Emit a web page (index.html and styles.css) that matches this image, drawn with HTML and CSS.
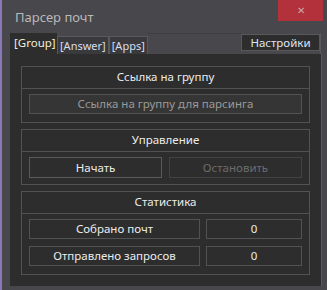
FILE: index.html
```html
<!DOCTYPE html>
<html lang="ru">
<head>
    <meta charset="UTF-8">
    <meta name="viewport" content="width=device-width, initial-scale=1.0">
    <title>Парсер почт</title>
    <link rel="stylesheet" href="styles.css">
</head>
<body>
    <div class="window">
        <div class="titlebar">
            <span class="title">Парсер почт</span>
            <span class="close">&#x2715;</span>
        </div>

        <div class="tabs">
            <div class="tab active">[Group]</div>
            <div class="tab">[Answer]</div>
            <div class="tab">[Apps]</div>
            <div class="spacer"></div>
            <button class="settings">Настройки</button>
        </div>

        <div class="content">
            <div class="group">
                <div class="group-title">Ссылка на группу</div>
                <div class="group-body">
                    <div class="field">Ссылка на группу для парсинга</div>
                </div>
            </div>

            <div class="group">
                <div class="group-title">Управление</div>
                <div class="group-body row">
                    <button class="btn">Начать</button>
                    <button class="btn" disabled>Остановить</button>
                </div>
            </div>

            <div class="group">
                <div class="group-title">Статистика</div>
                <div class="group-body stats">
                    <div class="cell label">Собрано почт</div>
                    <div class="cell value">0</div>
                    <div class="cell label">Отправлено запросов</div>
                    <div class="cell value">0</div>
                </div>
            </div>
        </div>
    </div>
</body>
</html>
```

FILE: styles.css
```css
body {
    margin: 0;
    background-color: #8a79b6;
    font-family: "Noto Sans", Arial, sans-serif;
    font-size: 11.5px;
    color: #ececec;
}
.window {
    margin-left: 2px;
    width: 325px;
    height: 290px;
    background-color: #48474c;
    display: flex;
    flex-direction: column;
}
.titlebar {
    height: 33px;
    display: flex;
    align-items: flex-start;
    justify-content: space-between;
}
.title {
    margin: 8px 0 0 13px;
    font-size: 13px;
    color: #b9b9bb;
}
.close {
    width: 45px;
    height: 21px;
    margin-right: 4px;
    background-color: #b2313a;
    color: #c9a9ab;
    font-size: 10px;
    text-align: center;
    line-height: 21px;
}
.tabs {
    height: 21px;
    margin: 0 6px 0 8px;
    display: flex;
    align-items: flex-end;
    border-right: 1px solid #5a5a5e;
}
.tab {
    height: 18px;
    padding: 0 2px;
    font-size: 11px;
    line-height: 17px;
    border: 1px solid #5a5a5e;
    border-bottom: none;
    color: #d8def0;
    background-color: #3a3a3d;
    box-sizing: border-box;
}
.tab.active {
    height: 21px;
    width: 47px;
    padding: 0 4px;
    font-size: 11.5px;
    line-height: 19px;
    border: none;
    background-color: #2d2d2d;
    color: #f4efd9;
}
.spacer {
    flex: 1;
    align-self: flex-start;
    border-top: 1px solid #3e3e41;
}
.settings {
    margin-bottom: 2px;
    width: 79px;
    height: 17px;
    padding: 0;
    font-family: inherit;
    font-size: 11.5px;
    color: #dfe6f2;
    background-color: #2d2d2d;
    border: 1px solid #58585c;
    align-self: center;
}
.content {
    margin: 0 5px 0 8px;
    height: 232px;
    padding: 12px 11px 0 11px;
    background-color: #2d2d2d;
    border-right: 1px solid #5a5a5e;
    box-sizing: border-box;
}
.group {
    border: 1px solid #525255;
    margin-bottom: 6px;
}
.group-title {
    height: 21px;
    line-height: 20px;
    text-align: center;
    border-bottom: 1px solid #525255;
}
.group-body {
    padding: 5px 7px 8px 7px;
}
.field {
    height: 20px;
    line-height: 18px;
    border: 1px solid #525255;
    background-color: #353535;
    color: #9a9a9a;
    text-align: center;
    box-sizing: border-box;
}
.row {
    display: flex;
    gap: 7px;
    padding-bottom: 6px;
}
.btn {
    flex: 1;
    height: 21px;
    padding: 0;
    font-family: inherit;
    font-size: 11.5px;
    color: #ececec;
    background-color: #2d2d2d;
    border: 1px solid #5a5a5e;
}
.btn:disabled {
    color: #6c6c6c;
    border-color: #434345;
}
.stats {
    display: grid;
    grid-template-columns: 171px 96px;
    gap: 7px 6px;
}
.cell {
    height: 20px;
    line-height: 18px;
    border: 1px solid #525255;
    text-align: center;
    box-sizing: border-box;
}
```
